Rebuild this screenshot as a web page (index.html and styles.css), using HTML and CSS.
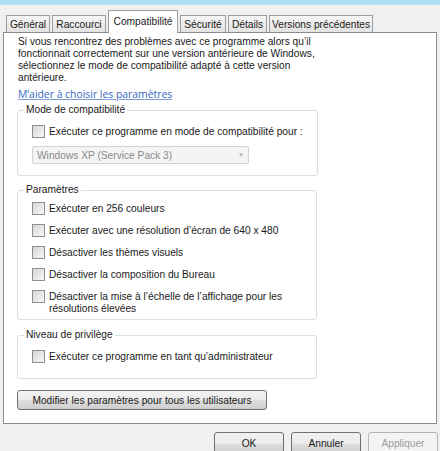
FILE: index.html
```html
<!DOCTYPE html>
<html lang="fr">

<head>
    <meta charset="UTF-8">
    <title>Propriétés - Compatibilité</title>
    <link rel="stylesheet" href="styles.css">
</head>

<body>
    <div class="titlebar"></div>

    <ul class="tabs">
        <li class="tab tab-general">Général</li>
        <li class="tab tab-shortcut">Raccourci</li>
        <li class="tab tab-compat active">Compatibilité</li>
        <li class="tab tab-security">Sécurité</li>
        <li class="tab tab-details">Détails</li>
        <li class="tab tab-versions">Versions précédentes</li>
    </ul>

    <div class="panel">
        <p class="intro">Si vous rencontrez des problèmes avec ce programme alors qu’il<br>fonctionnait correctement sur une version antérieure de Windows,<br>sélectionnez le mode de compatibilité adapté à cette version<br>antérieure.</p>
        <a class="help-link" href="#">M’aider à choisir les paramètres</a>

        <fieldset class="group group-mode">
            <legend>Mode de compatibilité</legend>
            <label class="check"><span class="box"></span>Exécuter ce programme en mode de compatibilité pour :</label>
            <div class="select">
                <span>Windows XP (Service Pack 3)</span>
                <span class="arrow">&#9660;</span>
            </div>
        </fieldset>

        <fieldset class="group group-settings">
            <legend>Paramètres</legend>
            <label class="check"><span class="box"></span>Exécuter en 256 couleurs</label>
            <label class="check"><span class="box"></span>Exécuter avec une résolution d’écran de 640 x 480</label>
            <label class="check"><span class="box"></span>Désactiver les thèmes visuels</label>
            <label class="check"><span class="box"></span>Désactiver la composition du Bureau</label>
            <label class="check"><span class="box"></span><span>Désactiver la mise à l’échelle de l’affichage pour les<br>résolutions élevées</span></label>
        </fieldset>

        <fieldset class="group group-privilege">
            <legend>Niveau de privilège</legend>
            <label class="check"><span class="box"></span>Exécuter ce programme en tant qu’administrateur</label>
        </fieldset>

        <button class="btn btn-all">Modifier les paramètres pour tous les utilisateurs</button>
    </div>

    <div class="footer">
        <button class="btn">OK</button>
        <button class="btn">Annuler</button>
        <button class="btn" disabled>Appliquer</button>
    </div>
</body>

</html>
```

FILE: styles.css
```css
body {
    margin: 0;
    width: 440px;
    height: 451px;
    overflow: hidden;
    background: #f0f0f0;
    font-family: 'Liberation Sans', Arial, sans-serif;
    font-size: 10.2px;
    color: #1a1a1a;
}

.titlebar {
    height: 4px;
    background: #aedcf5;
    border-bottom: 1px solid #c3e2f2;
}

.tabs {
    list-style: none;
    display: flex;
    align-items: flex-start;
    gap: 2px;
    height: 23px;
    margin: 5px 0 -1px;
    padding: 0 0 0 6px;
}

.tab {
    margin-top: 5px;
    height: 17px;
    line-height: 17px;
    text-align: center;
    border: 1px solid #9a9da4;
    border-bottom: none;
    box-sizing: border-box;
    background: linear-gradient(#f6f6f6, #e3e3e3);
}

.tab-general { width: 44px; }
.tab-shortcut { width: 54px; }
.tab-compat { width: 70px; }
.tab-security { width: 46px; }
.tab-details { width: 39px; }
.tab-versions { width: 104px; }

.tab.active {
    margin-top: 0;
    height: 23px;
    line-height: 21px;
    background: #fff;
}

.panel {
    margin: 0 3px;
    height: 392px;
    box-sizing: border-box;
    padding: 3px 14px 0;
    background: #fff;
    border: 1px solid #898c95;
}

.intro {
    margin: 0;
    line-height: 12px;
    white-space: nowrap;
}

.help-link {
    display: block;
    width: max-content;
    margin-top: 4px;
    line-height: 12px;
    font-family: 'Open Sans', sans-serif;
    font-size: 10.4px;
    color: #3468c0;
    text-decoration: underline;
    text-decoration-color: #7d9dd4;
}

.group {
    width: 300px;
    box-sizing: border-box;
    margin: 3px 0 0 -1px;
    padding: 0 14px;
    border: 1px solid #d5dfe5;
    border-radius: 3px;
    display: flex;
    flex-direction: column;
    gap: 8px;
}

.group legend {
    margin-left: -8px;
    padding: 0 2px;
    line-height: 14px;
}

.check {
    display: flex;
    align-items: flex-start;
    gap: 4px;
    line-height: 12px;
    min-height: 14px;
    padding-top: 1px;
    box-sizing: border-box;
    white-space: nowrap;
}

.box {
    flex: none;
    width: 11px;
    height: 11px;
    margin-top: -1px;
    border: 1px solid #8e8f8f;
    background: linear-gradient(135deg, #d6d6d6, #f7f7f7);
}

.group-mode {
    padding-top: 8px;
    padding-bottom: 11px;
    gap: 7px;
}

.select {
    width: 217px;
    height: 18px;
    box-sizing: border-box;
    display: flex;
    justify-content: space-between;
    align-items: center;
    padding: 0 4px;
    border: 1px solid #d3d3d3;
    border-radius: 2px;
    background: #f4f4f4;
    color: #8a8a8a;
}

.select .arrow {
    font-size: 6px;
    color: #b0b0b0;
}

.group-settings {
    margin-top: 7px;
    padding-top: 5px;
    padding-bottom: 4px;
}

.group-privilege {
    margin-top: 8px;
    padding-top: 8px;
    padding-bottom: 14px;
}

.btn {
    height: 20px;
    padding: 0 10px;
    font-family: inherit;
    font-size: 10.2px;
    color: #1a1a1a;
    border: 1px solid #707070;
    border-radius: 3px;
    background: linear-gradient(#f2f2f2 0%, #ebebeb 50%, #dddddd 51%, #cfcfcf 100%);
}

.btn-all {
    display: block;
    margin: 11px 0 0 -1px;
    width: 250px;
}

.btn:disabled {
    color: #9c9c9c;
    border-color: #b5b5b5;
    background: #f4f4f4;
}

.footer {
    display: flex;
    justify-content: flex-end;
    gap: 7px;
    margin-top: 8px;
    padding-right: 2px;
}

.footer .btn {
    width: 70px;
    height: 23px;
}
```
